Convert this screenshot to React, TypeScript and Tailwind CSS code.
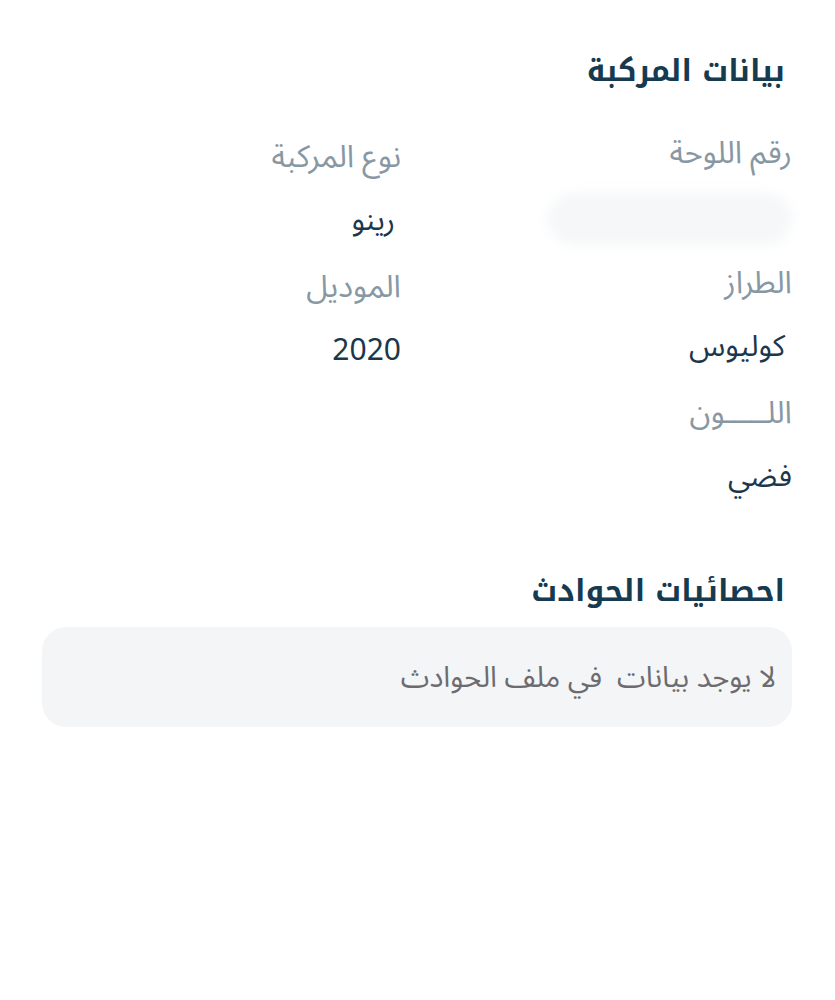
import React from "react";

const font = { fontFamily: '"Noto Sans Arabic", "DejaVu Sans", sans-serif' };
const kufi = { fontFamily: '"Noto Kufi Arabic", "Noto Sans Arabic", sans-serif' };

function Label({ children }: { children: React.ReactNode }) {
  return <div className="h-[65px] flex items-center text-[31px] leading-none text-[#8798a4]">{children}</div>;
}
function Value({ children, className = "" }: { children: React.ReactNode; className?: string }) {
  return <div className={"h-[65px] flex items-center pb-[4px] text-[30px] leading-none text-[#1c374b] " + className}>{children}</div>;
}

export default function App() {
  return (
    <div dir="rtl" className="w-[835px] h-[1000px] bg-white" style={font}>
      <div className="pt-[48px] pl-[42px] pr-[43px]">
        <h1 className="text-[30px] leading-none font-bold text-[#163a50] h-[45px] flex items-center pr-[7px]" style={kufi}>بيانات المركبة</h1>
        <div className="grid grid-cols-2 gap-x-[32px] mt-[28px]">
          <div className="flex flex-col">
            <Label>رقم اللوحة</Label>
            <div className="h-[65px] flex items-center">
              <div className="w-[244px] h-[52px] rounded-full bg-[#f5f7f8] blur-[6px]" />
            </div>
            <Label>الطراز</Label>
            <Value className="pr-[7px]">كوليوس</Value>
            <Label>اللـــــون</Label>
            <Value>فضي</Value>
          </div>
          <div className="flex flex-col pt-[4px]">
            <Label>نوع المركبة</Label>
            <Value className="pr-[6px]">رينو</Value>
            <Label>الموديل</Label>
            <Value className="text-[28px]">2020</Value>
          </div>
        </div>
        <h2 className="mt-[57px] text-[30px] leading-none font-bold text-[#163a50] h-[45px] flex items-center pr-[7px]" style={kufi}>احصائيات الحوادث</h2>
        <div className="mt-[14px] h-[100px] rounded-[24px] bg-[#f4f5f7] flex items-center pr-[16px] text-[29px] leading-none text-[#6c6c70]">
          لا يوجد بيانات&nbsp; في ملف الحوادث
        </div>
      </div>
    </div>
  );
}
